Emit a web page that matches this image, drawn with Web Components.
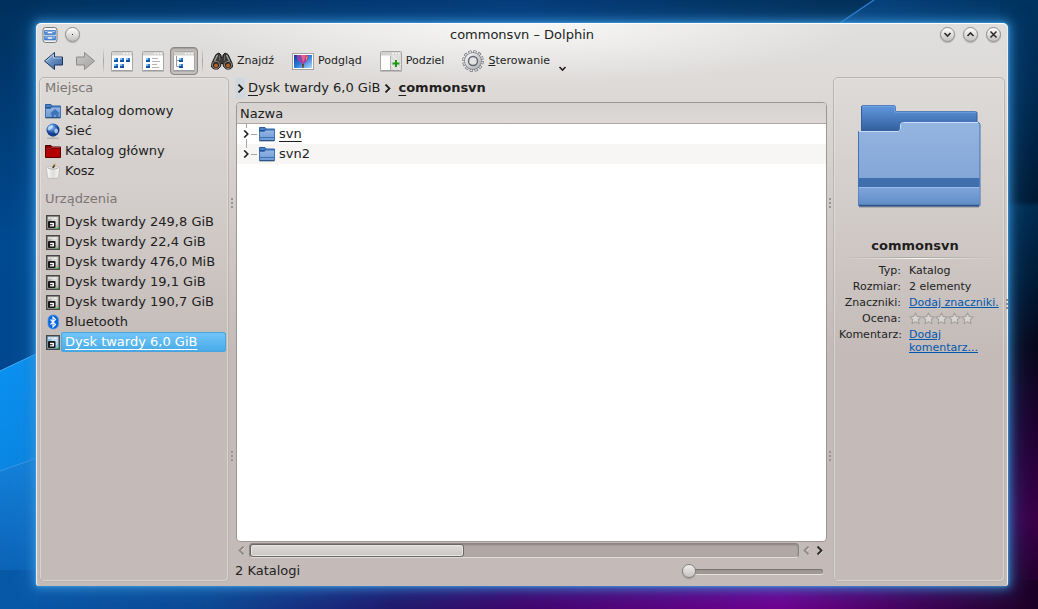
<!DOCTYPE html>
<html lang="pl">
<head>
<meta charset="utf-8">
<title>commonsvn – Dolphin</title>
<style>
html, body { margin: 0; height: 100%; }
body { font: 13px/20px "DejaVu Sans", sans-serif; color: #221e1d; }
</style>
</head>
<body>
<desktop-screen>
  <dolphin-window caption="commonsvn – Dolphin">
    <tool-bar slot="tools"></tool-bar>
    <places-panel slot="places"></places-panel>
    <folder-browser slot="content"></folder-browser>
    <info-panel slot="info"></info-panel>
  </dolphin-window>
</desktop-screen>
<script>
const define = (name, html, init) => {
  const t = document.createElement('template');
  t.innerHTML = html;
  customElements.define(name, class extends HTMLElement {
    constructor() {
      super();
      this.attachShadow({ mode: 'open' }).append(t.content.cloneNode(true));
    }
    connectedCallback() {
      if (this.ready) return;
      this.ready = true;
      if (init) init(this, this.shadowRoot);
    }
  });
};

/* ---------- icons ---------- */
const folder16 = (extra = '') => `<svg viewBox="0 0 16 16"><defs><linearGradient id="f" x2="0" y2="1"><stop stop-color="#94b6e4"/><stop offset="1" stop-color="#6e9ad6"/></linearGradient></defs><path d="M.5 13V1.500h5.500l1 1.500h8.500V13z" fill="#4880cc" stroke="#2f5d9c"/><path d="M.5 14.500V5.500h5l1-1.500h9v10.500z" fill="url(#f)" stroke="#3f72b4"/><path d="M1 4.500h4.500L6.500 3" stroke="#2a5490" fill="none"/>${extra || '<path d="M1 11.500h14" stroke="#3f70b0"/>'}<path d="M.5 14.800h15" stroke="#28486e"/></svg>`;
const winFrame = '<rect x=".5" y="1.500" width="21" height="19" rx="1" fill="#fdfdfd" stroke="#a6a5a3"/><path d="M1 2h20v3.500H1z" fill="#d3d2d1"/><path d="M12 3.500h2m1 0h2m1 0h2" stroke="#f4f4f4" stroke-width="1.500"/><path d="M0 21h22" stroke="#9a9998"/>';
const mini = (x, y) => `<path d="M${x} ${y}h4v4h-4z" fill="#2f7ad0"/><path d="M${x} ${y + 2}h4v2h-4z" fill="#1254a4"/><path d="M${x} ${y}h2v2h-2z" fill="#8cc0f4"/>`;
const ICONS = {
  app: '<svg viewBox="0 0 16 16"><rect x="1" y=".5" width="14" height="15" rx="2.500" fill="#f4f4f4" stroke="#77787a"/><path d="M2.500 3.500h11v4h-11zM2.500 9h11v4h-11z" fill="#4a90e2" stroke="#2a66b4" stroke-width=".6"/><path d="M3 4h10v1H3zM3 9.500h10v1H3z" fill="#9cc8fa"/><path d="M5.500 4.500h5v2h-5zM5.500 10h5v2h-5z" fill="#fff" stroke="#5b7fae" stroke-width=".5"/></svg>',
  back: '<svg viewBox="0 0 22 22"><defs><linearGradient id="g" x2="1" y2="1"><stop stop-color="#b0cbea"/><stop offset=".5" stop-color="#6289bc"/><stop offset="1" stop-color="#34619c"/></linearGradient></defs><path d="M1.500 11 11.500 2.500V7h8v8h-8v4.500z" fill="url(#g)" stroke="#1c3560" stroke-linejoin="round"/><path d="M3 11 10.500 4.500V8h8" fill="none" stroke="#c3daf2" stroke-width=".8"/></svg>',
  forward: '<svg viewBox="0 0 22 22"><defs><linearGradient id="g" x2="1" y2="1"><stop stop-color="#c9c8c6"/><stop offset="1" stop-color="#a5a3a1"/></linearGradient></defs><path d="M20.500 11 10.500 2.500V7h-8v8h8v4.500z" fill="url(#g)" stroke="#8d8b89" stroke-linejoin="round"/></svg>',
  grid: `<svg viewBox="0 0 22 22">${winFrame}${mini(3, 8)}${mini(9, 8)}${mini(15, 8)}${mini(3, 14)}${mini(9, 14)}</svg>`,
  list: `<svg viewBox="0 0 22 22">${winFrame}${mini(4, 8)}${mini(4, 14)}<path d="M10 8.500h6m-6 3h8m-8 3h5m-5 3h7" stroke="#b5b4b3"/></svg>`,
  tree: `<svg viewBox="0 0 22 22">${winFrame}<path d="M3.500 6v10.500H7M3.500 10.500H7" stroke="#999" fill="none"/>${mini(6, 8)}${mini(6, 14)}</svg>`,
  find: '<svg viewBox="0 0 22 22"><path d="M5 4.500 8 3l2 2v2h2V5l2-2 3 1.500 4 8.500.5 4L19 19h-4l-2.500-2.500-.5-3h-2l-.5 3L7 19H3L.5 17l.5-4z" fill="#3b3a38" stroke="#1f1e1d"/><path d="M6.500 5 3.500 11M15.500 5l3 6" stroke="#a3a29e" stroke-width="1.400"/><path d="M8.500 5.500v5M13.500 5.500v5" stroke="#6c6b68"/><circle cx="5" cy="15" r="3.600" fill="#232120" stroke="#8a847f"/><circle cx="17" cy="15" r="3.600" fill="#232120" stroke="#8a847f"/><circle cx="5" cy="15.500" r="2" fill="#b8601c"/><circle cx="17" cy="15.500" r="2" fill="#b8601c"/></svg>',
  preview: '<svg viewBox="0 0 22 22"><defs><linearGradient id="g" x2="1" y2="1"><stop stop-color="#10399c"/><stop offset=".5" stop-color="#2f7cdc"/><stop offset="1" stop-color="#b4dcf8"/></linearGradient></defs><rect x=".5" y="3.500" width="21" height="16" fill="#fff" stroke="#a3a2a1"/><path d="M2 5h18v13H2z" fill="url(#g)"/><path d="M5 5h11c1 4-2 7-4.500 9h-1C8 12 4 9 5 5z" fill="#b63b98"/><path d="m8 5 3 8 3-8z" fill="#e8628c"/><path d="m5 6 6 7-2-8z" fill="#7c48b4"/><path d="M14 7l2-1-2 5z" fill="#e8a048"/><path d="m10 14 2 0-.5 4h-1z" fill="#68400c"/></svg>',
  split: `<svg viewBox="0 0 22 22">${winFrame}<path d="M11 5.500h10V20H11z" fill="#dddcda"/><path d="m11 9 9 11m-9-5 5 5M13 6l8 9" stroke="#f4f4f3"/><path d="M10.500 5.500V20" stroke="#b4b3b2"/><path d="M12.500 13.500h7M16 10v7" stroke="#1c9a14" stroke-width="2"/></svg>`,
  gear: '<svg viewBox="0 0 22 22"><defs><linearGradient id="g" x2="1" y2="1"><stop stop-color="#f4f4f5"/><stop offset="1" stop-color="#b0b2b8"/></linearGradient></defs><circle cx="11" cy="11" r="9.200" fill="none" stroke="#6c6e75" stroke-width="3.200" stroke-dasharray="3.100 1.717"/><circle cx="11" cy="11" r="9" fill="none" stroke="#dedfe2" stroke-width="2.400" stroke-dasharray="1.900 2.812" stroke-dashoffset="-.6"/><circle cx="11" cy="11" r="6.400" fill="none" stroke="#74767e" stroke-width="4.600"/><circle cx="11" cy="11" r="6.400" fill="none" stroke="url(#g)" stroke-width="3.400"/><circle cx="11" cy="11" r="4.500" fill="#e3e2e0" stroke="#62656e" stroke-width="1.400"/></svg>',
  home: folder16('<path d="m10 6-5 4.500h1.500v4h2.500V12h2v2.500h2.500v-4H15z" fill="#3f74b8"/>'),
  folder: folder16(),
  net: '<svg viewBox="0 0 16 16"><defs><radialGradient id="g" cx=".4" cy=".3"><stop stop-color="#9cccfa"/><stop offset=".6" stop-color="#3a70c4"/><stop offset="1" stop-color="#123c8c"/></radialGradient></defs><path d="M2 15.200h12" stroke="#a9a7a5"/><path d="M6 13h4v2H6z" fill="#bbb"/><circle cx="8" cy="7" r="6.500" fill="url(#g)"/><path d="M4 3c2-1 4-1 4 0S7 5 6 6 4 8 3 7 3 4 4 3zM10 6c2-1 3 0 3 2s-2 3-3 2-1-3 0-4z" fill="#d4eafc" opacity=".75"/></svg>',
  root: '<svg viewBox="0 0 16 16"><path d="M.5 13V2.500h5.500l1 1.500h8.500V13z" fill="#8c0000" stroke="#4a0000"/><path d="M.5 14.500V6.500h5l1-1.500h9v9.500z" fill="#b40000" stroke="#5a0000"/><path d="M1 6h4.500l1-1.500H15" stroke="#e04848" fill="none" stroke-width=".6"/></svg>',
  trash: '<svg viewBox="0 0 16 16"><defs><linearGradient id="g" x2="1"><stop stop-color="#fff"/><stop offset=".5" stop-color="#dcdbda"/><stop offset="1" stop-color="#f8f8f8"/></linearGradient></defs><path d="M1.500 4.500c3-1.500 10-1.500 13 0l-1 10c-2 1.500-9 1.500-11 0z" fill="url(#g)" stroke="#b4b2b0" stroke-width=".7"/><path d="M3 5c3 1.500 7 1.500 10 0" stroke="#b4afac" fill="none"/><path d="m7 5 2-4 1.500.5L9 5z" fill="#54442c"/><path d="M9 2.500 10 .5" stroke="#dca820"/></svg>',
  disk: '<svg viewBox="0 0 16 16"><rect x="1.700" y="1.700" width="12.600" height="13.600" fill="var(--disk, #b9b8b6)" stroke="#484746" stroke-width="1.400"/><path d="M3 3h10v2H3z" fill="#e4e2e0" opacity=".8"/><path d="m6 6 4-3 3 3-1 5h-2z" fill="#fff" opacity=".45"/><rect x="3" y="7" width="7.500" height="7" rx="1" fill="#171717"/><path d="M5 8.800h4v3.700H5z" fill="#f8f8f8"/><path d="M4 10.700h3.500" stroke="#171717"/><path d="M12 13.500h2v1.500h-2z" fill="#25b41c"/></svg>',
  bt: '<svg viewBox="0 0 16 16"><rect x="3" y="1" width="10.500" height="14" rx="5" fill="#0a66dc" stroke="#4a94ec" stroke-width=".7"/><path d="m5.500 5.500 5 5L8 13V3l2.500 2.500-5 5" fill="none" stroke="#fff" stroke-width="1.100"/></svg>',
  star: '<svg viewBox="0 0 13 13"><path d="m6.500 1 1.700 3.300 4 .6-2.900 2.800.7 4-3.500-1.900L3 11.700l.7-4L.8 4.900l4-.6z" fill="#d8d5d4" stroke="#a8a29f" stroke-width="1.200" stroke-linejoin="round"/></svg>',
  right: '<svg viewBox="0 0 9 9"><path d="m3 1.500 4 4-4 4" fill="none" stroke="#fff" stroke-width="1.500" opacity=".5"/><path d="m2.500.5 4 4-4 4" fill="none" stroke="currentColor" stroke-width="1.800"/></svg>',
  left: '<svg viewBox="0 0 9 9"><path d="m7 1.500-4 4 4 4" fill="none" stroke="#fff" stroke-width="1.500" opacity=".5"/><path d="m6.500.5-4 4 4 4" fill="none" stroke="currentColor" stroke-width="1.800"/></svg>',
  down: '<svg viewBox="0 0 9 9"><path d="m1.500 3 3 3 3-3" fill="none" stroke="currentColor" stroke-width="1.600"/></svg>',
  up: '<svg viewBox="0 0 9 9"><path d="m1.500 6 3-3 3 3" fill="none" stroke="currentColor" stroke-width="1.600"/></svg>',
  close: '<svg viewBox="0 0 9 9"><path d="m1.500 1.500 6 6m0-6-6 6" fill="none" stroke="currentColor" stroke-width="1.500"/></svg>',
  dot: '<svg viewBox="0 0 9 9"><path d="M4 4h1v1H4z" fill="currentColor"/></svg>',
  bigfolder: `<svg viewBox="0 0 124 104"><defs>
    <linearGradient id="a" x2="0" y2="1"><stop stop-color="#6297de"/><stop offset="1" stop-color="#2c5896"/></linearGradient>
    <linearGradient id="b" x2="0" y2="1"><stop stop-color="#95b5e0"/><stop offset="1" stop-color="#7a9fd4"/></linearGradient>
    <linearGradient id="c" x2="0" y2="1"><stop stop-color="#80a6dc"/><stop offset="1" stop-color="#608cc6"/></linearGradient></defs>
    <path d="M2 102.500h120" stroke="#000" stroke-width="2" opacity=".3"/>
    <path d="M4.500 30V3q0-1.500 1.500-1.500h31q1.500 0 1.500 2V7.500h80q1.500 0 1.500 2v20z" fill="url(#a)" stroke="#335f9e"/>
    <path d="M5 2h33v6h81" fill="none" stroke="#85b2ee" stroke-width=".8"/>
    <path d="M1.500 101V27.500H41q2.500 0 2.500-3.500v-3q0-2.500 3-2.500H121q1.500 0 2 2V101q0 1-1 1H2.500q-1 0-1-1z" fill="url(#b)" stroke="#4272b2"/>
    <path d="M2 27.500h39q2.500 0 2.500-3.500v-3q0-2.500 3-2.500H121" fill="none" stroke="#c8defa"/>
    <path d="M1.500 83h121v18h-121z" fill="url(#c)"/><path d="M1.500 74h121v9h-121z" fill="#406fae"/><path d="M2 83.500h120" stroke="#9abbe8"/>
    <path d="M2 101.500h120" stroke="#2f5688" stroke-width="1.500"/></svg>`
};
define('ui-icon', `<style>
:host { display: block; flex: none; width: 16px; height: 16px; }
svg { display: block; width: 100%; height: 100%; }
</style>`, (el, root) => root.append(document.createRange().createContextualFragment(ICONS[el.getAttribute('name')])));

/* ---------- desktop ---------- */
define('desktop-screen', `<style>
:host { display: grid; position: relative; box-sizing: border-box; min-height: 100vh; padding: 23px 30px 23px 36px; }
svg { position: absolute; inset: 0; width: 100%; height: 100%; }
::slotted(*) { position: relative; }
</style>
<svg viewBox="0 0 1038 609" preserveAspectRatio="none" aria-hidden="true"><defs>
<linearGradient id="top" x2="1"><stop stop-color="#00305c"/><stop offset=".5" stop-color="#053c7a"/><stop offset=".8" stop-color="#033058"/><stop offset="1" stop-color="#00305c"/></linearGradient>
<linearGradient id="l" x2="0" y2="1"><stop stop-color="#00305c"/><stop offset=".4" stop-color="#004a92"/><stop offset="1" stop-color="#00428a"/></linearGradient>
<linearGradient id="m" x2="0" y2="1"><stop stop-color="#0a92f2"/><stop offset="1" stop-color="#0a78d2"/></linearGradient>
<linearGradient id="n" x2="0" y2="1"><stop stop-color="#1482dc"/><stop offset="1" stop-color="#0858a8"/></linearGradient>
<linearGradient id="w" x2="1"><stop stop-color="#0a4684"/><stop offset="1" stop-color="#00335f"/></linearGradient>
<linearGradient id="bot" x2="1"><stop stop-color="#0858a8"/><stop offset=".2" stop-color="#0c4894"/><stop offset=".38" stop-color="#20186c"/><stop offset=".5" stop-color="#40046c"/><stop offset=".75" stop-color="#700090"/><stop offset=".9" stop-color="#3c0050"/><stop offset="1" stop-color="#1c0024"/></linearGradient>
<linearGradient id="r" x2="0" y2="1"><stop stop-color="#00335f"/><stop offset=".15" stop-color="#002c54"/><stop offset=".33" stop-color="#001a34"/><stop offset=".34" stop-color="#002c50"/><stop offset=".45" stop-color="#001c38"/><stop offset=".57" stop-color="#08081c"/><stop offset=".75" stop-color="#280038"/><stop offset=".85" stop-color="#3a0048"/><stop offset="1" stop-color="#1c0024"/></linearGradient></defs>
<path d="M0 0h1038v609H0z" fill="url(#top)"/>
<path d="M0 0h40v609H0z" fill="url(#l)"/>
<path d="M0 371 40 352V609H0z" fill="url(#m)"/><path d="M0 371 40 352" stroke="#46aef8"/>
<path d="M0 471 40 457V609H0z" fill="url(#n)"/><path d="M0 471 40 457" stroke="#3c98e4"/>
<path d="M874 0h164v50H800z" fill="url(#w)"/><path d="M874 0 800 50" stroke="#2c7ccc" stroke-width="1.500"/>
<path d="M1000 0h38v609h-38z" fill="url(#r)"/>
<path d="M0 580h1038v29H0z" fill="url(#bot)"/><path d="M0 570h38v39H0z" fill="#0858a8"/></svg>
<slot></slot>`);

/* ---------- window ---------- */
define('round-button', `<style>
:host { display: block; width: 15px; height: 15px; }
button { display: grid; place-items: center; width: 15px; height: 15px; padding: 0; border: 1px solid #8f8d8b; border-radius: 50%; background: linear-gradient(#fdfdfc, #c3c1bf); box-shadow: 0 1px 1px #8888; color: #2c2827; }
ui-icon { width: 9px; height: 9px; }
</style><button type="button"></button>`, (el, root) => {
  const b = root.querySelector('button');
  b.setAttribute('aria-label', el.getAttribute('label'));
  b.innerHTML = `<ui-icon name="${el.getAttribute('icon')}"></ui-icon>`;
});
define('split-grip', `<style>
:host { display: flex; flex-direction: column; justify-content: space-around; align-items: center; }
i { width: 2px; height: 10px; background: repeating-linear-gradient(#9a9492 0 2px, transparent 2px 4px); }
</style><i></i><i></i>`);
define('dolphin-window', `<style>
:host { display: flex; flex-direction: column; min-width: 0; box-sizing: border-box; border-top: 1px solid #fff; border-radius: 5px 5px 3px 3px; padding: 0 3px 4px;
  background: radial-gradient(ellipse 340px 60px at 50% 0, #f8f8f7, #f8f8f700), linear-gradient(#e0dfdd, #dddad8 60px, #c4bbb8 330px);
  box-shadow: inset 1px 0 #e8f0f4, inset -1px 0 #e8f0f4, 0 0 3px #4aa8e4, 0 0 9px 3px #3a94d8b0, 0 0 20px 8px #2a80c850; }
header { display: grid; grid-template-columns: 1fr auto 1fr; align-items: center; height: 21px; padding: 0 3px; }
.left, .right { display: flex; gap: 8px; align-items: center; }
.left { gap: 7px; }
.right { justify-content: flex-end; padding-right: 1px; }
h1 { margin: 0; font-size: 13px; font-weight: normal; }
main { flex: 1; display: grid; grid-template-columns: 190px 6px minmax(0, 1fr) 6px 172px; }
.edge { position: absolute; right: 0; top: 50%; width: 2px; height: 10px; margin-top: -6px; background: repeating-linear-gradient(#8f8987 0 2px, transparent 2px 4px); }
</style>
<header><div class="left"><ui-icon name="app"></ui-icon><round-button icon="dot" label="Na wszystkich pulpitach"></round-button></div>
<h1></h1>
<div class="right"><round-button icon="down" label="Minimalizuj"></round-button><round-button icon="up" label="Maksymalizuj"></round-button><round-button icon="close" label="Zamknij"></round-button></div></header>
<slot name="tools"></slot>
<main><slot name="places"></slot><split-grip></split-grip><slot name="content"></slot><split-grip></split-grip><slot name="info"></slot></main>
<div class="edge"></div>`, (el, root) => root.querySelector('h1').textContent = el.getAttribute('caption'));

/* ---------- toolbar ---------- */
define('tool-button', `<style>
:host { display: block; }
button { display: flex; align-items: center; gap: 4px; height: 28px; box-sizing: border-box; padding: 0 2px; border: 1px solid transparent; border-radius: 4px; background: none; font: 11px/16px "DejaVu Sans", sans-serif; color: inherit; }
:host([text]) button { padding: 0 10px 0 3px; }
:host([pressed]) button { border-color: #8b8684; background: #c5c1be; box-shadow: inset 0 1px 2px #9a9593; }
ui-icon { width: 22px; height: 22px; }
.more { width: 9px; height: 9px; margin: 15px 0 0 4px; }
</style><button type="button"><slot></slot></button>`, (el, root) => {
  const b = root.querySelector('button');
  const ic = document.createElement('ui-icon');
  ic.setAttribute('name', el.getAttribute('icon'));
  b.prepend(ic);
  if (el.hasAttribute('label')) b.setAttribute('aria-label', el.getAttribute('label'));
  if (el.hasAttribute('menu')) b.insertAdjacentHTML('beforeend', '<ui-icon class="more" name="down"></ui-icon>');
});
define('tool-bar', `<style>
:host { display: flex; align-items: center; gap: 3px; height: 32px; padding-left: 1px; }
hr { width: 1px; height: 26px; margin: 0 1px; border: 0; background: linear-gradient(#bbb8b600, #a5a2a0, #bbb8b600); }
</style>
<tool-button icon="back" label="Wstecz"></tool-button><tool-button icon="forward" label="Naprzód"></tool-button><hr>
<tool-button icon="grid" label="Ikony"></tool-button><tool-button icon="list" label="Zwarty"></tool-button><tool-button icon="tree" label="Szczegóły" pressed></tool-button><hr>
<tool-button icon="find" text>Znajdź</tool-button><tool-button icon="preview" text>Podgląd</tool-button><tool-button icon="split" text>Podziel</tool-button><tool-button icon="gear" text menu><span><u>S</u>terowanie</span></tool-button>`);

/* ---------- places ---------- */
define('place-item', `<style>
:host { display: block; }
a { display: flex; height: 20px; align-items: center; color: inherit; text-decoration: none; }
span { flex: 1; box-sizing: border-box; height: 20px; padding-left: 4px; white-space: nowrap; }
:host([selected]) { --disk: #8cc4e8; }
:host([selected]) span { border-radius: 3px; color: #fff; background: linear-gradient(#74c6fa, #46aae6); box-shadow: inset 0 0 0 1px #48a4dc; text-decoration: underline; text-decoration-thickness: 1px; text-underline-offset: 3px; }
</style><a href="#"><span><slot></slot></span></a>`, (el, root) => {
  const ic = document.createElement('ui-icon');
  ic.setAttribute('name', el.getAttribute('icon'));
  root.querySelector('a').prepend(ic);
});
const frame = 'box-sizing: border-box; border: 1px solid #b9b4b1; border-radius: 5px; box-shadow: inset 1px 1px #ebe9e780, inset -1px -1px #ebe9e780;';
define('places-panel', `<style>
:host { display: block; ${frame} padding: 0 2px 0 5px; }
h2 { margin: 0 0 3px; font-size: 13px; font-weight: normal; line-height: 20px; color: #7c7674; }
h2 + nav + h2 { margin-top: 8px; }
nav { display: block; }
</style>
<h2>Miejsca</h2>
<nav><place-item icon="home">Katalog domowy</place-item><place-item icon="net">Sieć</place-item><place-item icon="root">Katalog główny</place-item><place-item icon="trash">Kosz</place-item></nav>
<h2>Urządzenia</h2>
<nav><place-item icon="disk">Dysk twardy 249,8 GiB</place-item><place-item icon="disk">Dysk twardy 22,4 GiB</place-item><place-item icon="disk">Dysk twardy 476,0 MiB</place-item><place-item icon="disk">Dysk twardy 19,1 GiB</place-item><place-item icon="disk">Dysk twardy 190,7 GiB</place-item><place-item icon="bt">Bluetooth</place-item><place-item icon="disk" selected>Dysk twardy 6,0 GiB</place-item></nav>`);

/* ---------- folder browser ---------- */
define('crumb-bar', `<style>
:host { display: flex; align-items: center; gap: 3px; height: 22px; }
ui-icon { width: 9px; height: 9px; }
.root { display: grid; place-items: center; width: 10px; height: 22px; padding: 0; border: 0; border-radius: 3px; background: #cfd8de; color: inherit; }
a { color: inherit; text-decoration: none; }
u { text-underline-offset: 3px; }
a:last-child { font-weight: bold; margin-left: 3px; }
</style>
<button class="root" type="button" aria-label="Miejsca"><ui-icon name="right"></ui-icon></button>
<a href="#"><u>D</u>ysk twardy 6,0 GiB</a><ui-icon name="right"></ui-icon><a href="#"><u>c</u>ommonsvn</a>`);
define('file-table', `<style>
:host { display: block; flex: 1; margin: 3px 0 0 1px; border: 1px solid #9b9795; border-radius: 4px; background: #fff; overflow: hidden; box-sizing: border-box; }
table { width: 100%; border-spacing: 0; }
th { height: 19px; padding: 1px 0 0 3px; text-align: left; font-weight: normal; line-height: 19px; background: linear-gradient(#d5d2cf, #dcd9d6); border-bottom: 1px solid #b0a6a2; }
td { padding: 0; height: 20px; }
tr:nth-child(even) td { background: #f7f6f5; }
.row { display: flex; align-items: center; height: 20px; padding-left: 5px; }
.row > .arrow { width: 8px; height: 8px; }
.branch { width: 6px; height: 1px; margin: 0 2px 0 1px; background: #a7a5a4; }
.row > a { margin-left: 4px; color: inherit; text-decoration: none; }
.current { text-decoration: underline; text-underline-offset: 3px; text-decoration-thickness: 1px; }
.first { background: linear-gradient(#a7a5a4, #a7a5a4) 9px 0 / 1px 4px no-repeat, linear-gradient(#a7a5a4, #a7a5a4) 9px 15px / 1px 5px no-repeat; }
.last { background: linear-gradient(#a7a5a4, #a7a5a4) 9px 0 / 1px 4px no-repeat; }
</style>
<table><thead><tr><th scope="col">Nazwa</th></tr></thead><tbody>
<tr><td><div class="row first"><ui-icon class="arrow" name="right"></ui-icon><i class="branch"></i><ui-icon name="folder"></ui-icon><a href="#"><span class="current">svn</span></a></div></td></tr>
<tr><td><div class="row last"><ui-icon class="arrow" name="right"></ui-icon><i class="branch"></i><ui-icon name="folder"></ui-icon><a href="#">svn2</a></div></td></tr>
</tbody></table>`);
define('scroll-strip', `<style>
:host { display: flex; align-items: center; gap: 3px; height: 15px; margin: 1px 3px 0 2px; }
button { display: grid; place-items: center; width: 9px; height: 15px; padding: 0; border: 0; background: none; color: #2a2625; }
button.off { color: #8e8886; }
ui-icon { width: 9px; height: 9px; }
.track { flex: 1; box-sizing: border-box; height: 15px; border: 1px solid #8a8381; border-bottom-color: #e0dcda; border-radius: 4px; background: #b1a8a5; box-shadow: inset 0 1px 2px #8a8280; }
.thumb { width: 39%; height: 13px; box-sizing: border-box; border: 1px solid #6b6563; border-radius: 3px; background: linear-gradient(#dedbd9, #c9c5c2); box-shadow: inset 0 0 0 1px #e9e7e5; }
.next { margin-left: 1px; }
</style>
<button class="off" type="button" aria-label="W lewo"><ui-icon name="left"></ui-icon></button>
<div class="track"><div class="thumb"></div></div>
<button class="off" type="button" aria-label="Poprzedni"><ui-icon name="left"></ui-icon></button>
<button class="next" type="button" aria-label="W prawo"><ui-icon name="right"></ui-icon></button>`);
define('status-strip', `<style>
:host { display: flex; align-items: center; justify-content: space-between; height: 22px; padding: 2px 4px 0 0; }
input { -webkit-appearance: none; appearance: none; width: 141px; height: 16px; margin: 0; background: none; }
input::-webkit-slider-runnable-track { height: 5px; border-radius: 3px; background: #9f9895; box-shadow: inset 0 1px 1px #77706e, 0 1px #e4e1df; }
input::-webkit-slider-thumb { -webkit-appearance: none; width: 14px; height: 14px; margin-top: -5px; border: 1px solid #858180; border-radius: 50%; background: linear-gradient(#f0efee, #c6c2bf); box-shadow: 0 1px 1px #7778; }
</style><span>2 Katalogi</span><input type="range" min="0" max="100" value="0" aria-label="Rozmiar ikon">`);
define('folder-browser', `<style>
:host { display: flex; flex-direction: column; min-width: 0; }
</style><crumb-bar></crumb-bar><file-table></file-table><scroll-strip></scroll-strip><status-strip></status-strip>`);

/* ---------- information ---------- */
define('info-panel', `<style>
:host { display: block; ${frame} padding: 26px 5px 0; }
.big { width: 124px; height: 104px; margin: 0 auto; }
h2 { margin: 28px 0 1px; font-size: 13px; line-height: 20px; text-align: center; padding-right: 8px; }
hr { height: 2px; margin: 0 0 5px; border: 0; background: linear-gradient(90deg, #fff0, #fff, #fff0) bottom / 100% 1px no-repeat, linear-gradient(90deg, #a7a2a000, #a7a2a0, #a7a2a000); }
dl { display: grid; grid-template-columns: 62px minmax(0, 1fr); gap: 3px 8px; margin: 0; font-size: 11px; line-height: 13px; }
dt { text-align: right; }
dd { margin: 0; overflow: visible; }
.clip { white-space: nowrap; }
a { color: #0057ae; }
.stars { display: flex; }
.stars ui-icon { width: 13px; height: 13px; }
</style>
<ui-icon class="big" name="bigfolder"></ui-icon>
<h2>commonsvn</h2><hr>
<dl><dt>Typ:</dt><dd>Katalog</dd><dt>Rozmiar:</dt><dd>2 elementy</dd>
<dt>Znaczniki:</dt><dd class="clip"><a href="#">Dodaj znaczniki.</a></dd>
<dt>Ocena:</dt><dd class="stars"><ui-icon name="star"></ui-icon><ui-icon name="star"></ui-icon><ui-icon name="star"></ui-icon><ui-icon name="star"></ui-icon><ui-icon name="star"></ui-icon></dd>
<dt>Komentarz:</dt><dd><a href="#">Dodaj komentarz...</a></dd></dl>`);
</script>
</body>
</html>
